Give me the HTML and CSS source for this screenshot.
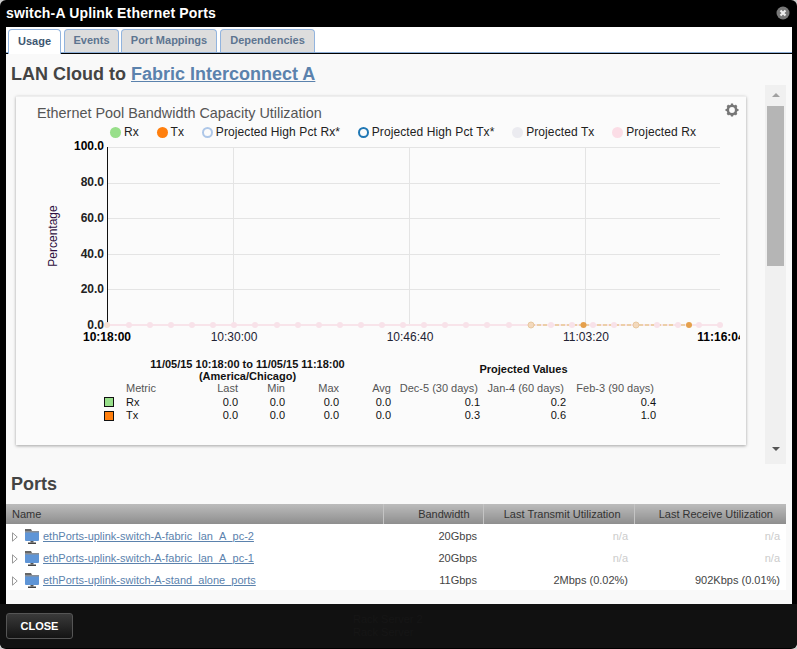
FILE: index.html
```html
<!DOCTYPE html>
<html lang="en">
<head>
<meta charset="UTF-8">
<title>switch-A Uplink Ethernet Ports</title>
<link rel="stylesheet" href="styles.css">
</head>

<body>
<div class="window">

  <!-- title bar -->
  <header class="titlebar">
    <h1>switch-A Uplink Ethernet Ports</h1>
    <svg class="close-x" width="14" height="14" viewBox="0 0 14 14">
      <circle cx="7" cy="7" r="6.5" fill="#777"/>
      <path d="M4.5 4.5l5 5M9.5 4.5l-5 5" stroke="#eee" stroke-width="2.2"/>
    </svg>
  </header>

  <div class="panel">
    <!-- tabs -->
    <nav class="tabs">
      <a href="#" class="tab active">Usage</a>
      <a href="#" class="tab">Events</a>
      <a href="#" class="tab">Port Mappings</a>
      <a href="#" class="tab">Dependencies</a>
    </nav>

    <div class="content">
      <h2 class="heading">LAN Cloud to <a href="#">Fabric Interconnect A</a></h2>

      <div class="chart-row">
        <!-- chart card -->
        <section class="card">
          <svg class="gear" width="14" height="14" viewBox="0 0 14 14">
            <circle cx="7" cy="7" r="4.2" fill="none" stroke="#777" stroke-width="2.6"/>
            <path d="M7 0.5v3M7 10.5v3M0.5 7h3M10.5 7h3M2.4 2.4l2 2M9.6 9.6l2 2M11.6 2.4l-2 2M4.4 9.6l-2 2" stroke="#777" stroke-width="2.2"/>
          </svg>
          <h3 class="card-title">Ethernet Pool Bandwidth Capacity Utilization</h3>

          <ul class="legend">
            <li><i class="dot dot-rx"></i>Rx</li>
            <li><i class="dot dot-tx"></i>Tx</li>
            <li><i class="dot ring-rx"></i>Projected High Pct Rx*</li>
            <li><i class="dot ring-tx"></i>Projected High Pct Tx*</li>
            <li><i class="dot dot-ptx"></i>Projected Tx</li>
            <li><i class="dot dot-prx"></i>Projected Rx</li>
          </ul>

          <!-- svg origin is page x=16, y=140 -->
          <svg class="plot" width="724" height="208" viewBox="0 0 724 208">
            <g class="grid">
              <path d="M91 7.5h613M91 43.5h613M91 78.5h613M91 114.5h613M91 149.5h613"/>
              <path d="M217.5 7v178M393.5 7v178M569.5 7v178"/>
            </g>
            <path class="axis" d="M91.5 7v178"/>
            <text class="percent" transform="translate(41 96) rotate(-90)">Percentage</text>

            <g class="y-labels">
              <text class="strong" x="88" y="10">100.0</text>
              <text x="88" y="46">80.0</text>
              <text x="88" y="82">60.0</text>
              <text x="88" y="118">40.0</text>
              <text x="88" y="153">20.0</text>
              <text x="88" y="189">0.0</text>
            </g>

            <path class="line-pink" d="M91 185h613"/>
            <path class="line-orange" d="M515 185h158"/>
            <g class="pts-pink">
              <circle cx="113" cy="185" r="3"/><circle cx="134" cy="185" r="3"/><circle cx="155" cy="185" r="3"/>
              <circle cx="176" cy="185" r="3"/><circle cx="197" cy="185" r="3"/><circle cx="218" cy="185" r="3"/>
              <circle cx="239" cy="185" r="3"/><circle cx="261" cy="185" r="3"/><circle cx="282" cy="185" r="3"/>
              <circle cx="303" cy="185" r="3"/><circle cx="324" cy="185" r="3"/><circle cx="345" cy="185" r="3"/>
              <circle cx="366" cy="185" r="3"/><circle cx="387" cy="185" r="3"/><circle cx="408" cy="185" r="3"/>
              <circle cx="429" cy="185" r="3"/><circle cx="450" cy="185" r="3"/><circle cx="471" cy="185" r="3"/>
              <circle cx="493" cy="185" r="3"/><circle cx="535" cy="185" r="3"/><circle cx="556" cy="185" r="3"/>
              <circle cx="577" cy="185" r="3"/><circle cx="598" cy="185" r="3"/><circle cx="641" cy="185" r="3"/>
              <circle cx="662" cy="185" r="3"/><circle cx="683" cy="185" r="3"/><circle cx="704" cy="185" r="3"/>
            </g>
            <circle class="pt-first" cx="91" cy="185" r="3"/>
            <circle class="pt-soft" cx="515" cy="185" r="3"/>
            <circle class="pt-solid" cx="567.500" cy="185" r="3"/>
            <circle class="pt-soft" cx="620" cy="185" r="3"/>
            <circle class="pt-solid" cx="673" cy="185" r="3"/>

            <g class="x-labels">
              <text class="strong" x="91" y="201">10:18:00</text>
              <text x="218" y="201">10:30:00</text>
              <text x="394" y="201">10:46:40</text>
              <text x="570" y="201">11:03:20</text>
              <text class="strong" x="705" y="201">11:16:04</text>
            </g>
          </svg>

          <!-- stats under the plot -->
          <div class="stats">
            <div class="st-range">11/05/15 10:18:00 to 11/05/15 11:18:00<br>(America/Chicago)</div>
            <div class="st-proj">Projected Values</div>

            <span></span><span class="hd left">Metric</span><span class="hd">Last</span><span class="hd">Min</span><span class="hd">Max</span><span class="hd">Avg</span><span class="hd pj">Dec-5 (30 days)</span><span class="hd pj">Jan-4 (60 days)</span><span class="hd pj">Feb-3 (90 days)</span>

            <span><i class="swatch sw-rx"></i></span><span class="left">Rx</span><span>0.0</span><span>0.0</span><span>0.0</span><span>0.0</span><span>0.1</span><span>0.2</span><span>0.4</span>

            <span><i class="swatch sw-tx"></i></span><span class="left">Tx</span><span>0.0</span><span>0.0</span><span>0.0</span><span>0.0</span><span>0.3</span><span>0.6</span><span>1.0</span>
          </div>
        </section>

        <!-- scrollbar -->
        <div class="scrollbar">
          <b class="arrow up"></b>
          <div class="thumb"></div>
          <b class="arrow down"></b>
        </div>
      </div>

      <h2 class="heading ports-title">Ports</h2>

      <table class="ports">
        <thead>
          <tr>
            <th class="c-name">Name</th>
            <th class="c-bw">Bandwidth</th>
            <th class="c-tx">Last Transmit Utilization</th>
            <th class="c-rx">Last Receive Utilization</th>
          </tr>
        </thead>
        <tbody>
          <tr>
            <td class="c-name"><svg class="twist" width="6" height="10" viewBox="0 0 6 10"><path d="M.5 .8v8.400L5.200 5z"/></svg><svg class="folder" width="16" height="17" viewBox="0 0 16 17"><use href="#port-folder"/></svg><a href="#">ethPorts-uplink-switch-A-fabric_lan_A_pc-2</a></td>
            <td>20Gbps</td><td class="na">n/a</td><td class="na">n/a</td>
          </tr>
          <tr>
            <td class="c-name"><svg class="twist" width="6" height="10" viewBox="0 0 6 10"><path d="M.5 .8v8.400L5.200 5z"/></svg><svg class="folder" width="16" height="17" viewBox="0 0 16 17"><use href="#port-folder"/></svg><a href="#">ethPorts-uplink-switch-A-fabric_lan_A_pc-1</a></td>
            <td>20Gbps</td><td class="na">n/a</td><td class="na">n/a</td>
          </tr>
          <tr>
            <td class="c-name"><svg class="twist" width="6" height="10" viewBox="0 0 6 10"><path d="M.5 .8v8.400L5.200 5z"/></svg><svg class="folder" width="16" height="17" viewBox="0 0 16 17"><use href="#port-folder"/></svg><a href="#">ethPorts-uplink-switch-A-stand_alone_ports</a></td>
            <td>11Gbps</td><td>2Mbps (0.02%)</td><td>902Kbps (0.01%)</td>
          </tr>
        </tbody>
      </table>
    </div>
  </div>

  <!-- footer -->
  <footer class="footer">
    <button class="close-btn" type="button">CLOSE</button>
    <div class="ghost">Rack Server 2<br>Rack Server</div>
  </footer>
</div>

<svg width="0" height="0" class="defs">
  <defs>
    <g id="port-folder">
      <path d="M1 3V1h6l1 2z" fill="#666"/>
      <rect x="1" y="3" width="14" height="10" rx="1" fill="#5f95d6"/>
      <rect x="1" y="3" width="14" height="1.500" fill="#8a8f96"/>
      <path d="M6.500 13h3v1.500h-3z" fill="#555"/>
      <path d="M4 14.500h8V16H4z" fill="#444"/>
    </g>
  </defs>
</svg>
</body>
</html>
```

FILE: styles.css
```css
/* page */
html, body{
  margin:0;
  height:100%;
  overflow:hidden;
}
body{
  background:#ccc;
  font-family:"Liberation Sans", Arial, sans-serif;
  font-size:11px;
  color:#222;
}
.window{
  width:797px;
  height:649px;
  box-sizing:border-box;
  background:#000;
  border-radius:6px;
  display:flex;
  flex-direction:column;
  overflow:hidden;
}
.defs{ position:absolute }

/* title bar */
.titlebar{
  height:27px;
  flex:none;
  display:flex;
  align-items:center;
  justify-content:space-between;
  padding:0 7px 1px 6px;
  box-sizing:border-box;
}
.titlebar h1{
  margin:0;
  font-size:14px;
  letter-spacing:.17px;
  color:#fff;
}

/* main panel */
.panel{
  flex:none;
  height:577px;
  margin:0 5px 0 6px;
  background:#fff;
  display:flex;
  flex-direction:column;
  overflow:hidden;
}

/* tabs */
.tabs{
  height:27px;
  flex:none;
  box-sizing:border-box;
  display:flex;
  gap:3px;
  padding:2px 0 0 2px;
  align-items:flex-end;
  border-bottom:1px solid #000;
  box-shadow:inset 0 -1px 0 #8fb0d8;
}
.tab{
  box-sizing:border-box;
  height:23px;
  margin-bottom:1px;
  padding:0;
  line-height:20px;
  font-size:11px;
  font-weight:bold;
  text-align:center;
  color:#5d7590;
  text-decoration:none;
  background:#ddd;
  border:1px solid #92b4de;
  border-bottom:none;
  border-radius:4px 4px 0 0;
}
.tab:nth-child(1){ width:53px }
.tab:nth-child(2){ width:55px }
.tab:nth-child(3){ width:96px; margin-left:-1px }
.tab:nth-child(4){ width:95px }
.tab.active{
  background:#fff;
  color:#3d5670;
  height:25px;
  line-height:22px;
  margin-bottom:-1px;
  position:relative;
}

/* content */
.content{
  flex:1;
  background:#f9f9f9;
  overflow:hidden;
}
.heading{
  margin:0;
  padding:8px 0 0 5px;
  font-size:18px;
  line-height:24px;
  font-weight:bold;
  color:#444;
}
.heading a{ color:#5b82ad }

.chart-row{
  display:flex;
  align-items:flex-start;
  margin-top:-1px;
  padding-left:10px;
}

/* chart card */
.card{
  position:relative;
  width:730px;
  height:349px;
  box-sizing:border-box;
  margin-top:11px;
  background:#fbfbfb;
  border-top:1px solid #eee;
  box-shadow:0 1px 3px rgba(0,0,0,.35);
}
.gear{
  position:absolute;
  top:6px;
  right:7px;
}
.card-title{
  margin:0;
  padding:8px 0 0 21px;
  font-size:14.4px;
  line-height:17px;
  font-weight:normal;
  color:#555;
}
.legend{
  list-style:none;
  margin:0;
  padding:3px 0 0 94px;
  display:flex;
  gap:17.7px;
  font-size:12px;
  letter-spacing:.1px;
  line-height:15px;
  color:#222;
}
.legend li{
  display:flex;
  align-items:center;
  gap:3px;
}
.dot{
  width:11px;
  height:11px;
  box-sizing:border-box;
  border-radius:50%;
}
.dot-rx{ background:#98df8a }
.dot-tx{ background:#ff7f0e }
.ring-rx{ border:2px solid #aec7e8 }
.ring-tx{ border:2px solid #1f77b4 }
.dot-ptx{ background:#ebebf0 }
.dot-prx{ background:#fbdde6 }

/* plot */
.plot{
  display:block;
  font-family:"Liberation Sans", Arial, sans-serif;
}
.grid path{
  stroke:#e4e4e4;
  fill:none;
}
.axis{
  stroke:#111;
  fill:none;
}
.percent{
  font-size:12px;
  text-anchor:middle;
  fill:#301040;
}
.y-labels text{
  font-size:12px;
  font-weight:bold;
  text-anchor:end;
  fill:#222;
}
.y-labels .strong{ fill:#000 }
.x-labels text{
  font-size:12px;
  text-anchor:middle;
  fill:#223;
}
.x-labels .strong{
  font-weight:bold;
  fill:#000;
}
.line-pink{
  stroke:#f8e4ea;
  stroke-width:2;
}
.line-orange{
  stroke:#eccfa8;
  stroke-width:2;
  stroke-dasharray:4 2;
}
.pts-pink circle{ fill:#f8e2e9 }
.pt-first{ fill:#f5e0d4 }
.pt-soft{
  fill:#f3d9bd;
  stroke:#e8c8a0;
}
.pt-solid{ fill:#e5a04c }

/* stats */
.stats{
  display:grid;
  grid-template-columns:22px 50px 62px 47px 54px 52px 89px 86px 90px;
  margin:10px 0 0 88px;
  width:552px;
  font-size:11px;
  line-height:13.500px;
  text-align:right;
  color:#111;
  align-items:center;
}
.st-range{
  grid-column:1 / 7;
  text-align:center;
  font-weight:bold;
  line-height:12px;
}
.st-proj{
  grid-column:7 / 10;
  text-align:center;
  font-weight:bold;
}
.stats .left{ text-align:left }
.stats .hd{ color:#555 }
.stats .pj{ padding-right:2px }
.swatch{
  display:block;
  box-sizing:border-box;
  width:10px;
  height:10px;
  border:1px solid #111;
}
.sw-rx{ background:#98df8a }
.sw-tx{ background:#ff7f0e }

/* scrollbar */
.scrollbar{
  width:21px;
  height:379px;
  margin-left:19px;
  background:#f0f0f0;
  display:flex;
  flex-direction:column;
  align-items:center;
}
.arrow{
  width:0;
  height:0;
  flex:none;
  border-left:4px solid transparent;
  border-right:4px solid transparent;
}
.arrow.up{
  border-bottom:4px solid #a0a0a0;
  margin:8px 0 9px;
}
.arrow.down{
  border-top:4px solid #555;
  margin-top:181px;
}
.thumb{
  width:17px;
  height:160px;
  flex:none;
  background:#b5b5b5;
}

/* ports table */
.ports-title{
  padding:8px 0 0 5px;
}
.ports{
  border-collapse:collapse;
  table-layout:fixed;
  width:780px;
  margin-top:8px;
  font-size:11px;
  background:#fff;
}
.ports th{
  height:20px;
  padding:0 13px 0 0;
  box-sizing:border-box;
  font-weight:normal;
  font-size:11px;
  text-align:right;
  color:#333;
  background:linear-gradient(#bcbcbc,#8e8e8e);
  border-left:1px solid #c4c4c4;
}
.ports .c-name{
  width:377px;
  text-align:left;
  padding-left:6px;
  border-left:none;
}
.ports .c-bw{ width:100px }
.ports .c-tx{ width:151px }
.ports .c-rx{ width:152px }
.ports td{
  height:22px;
  box-sizing:border-box;
  padding:2px 6px 0 0;
  text-align:right;
  color:#444;
  white-space:nowrap;
}
.ports td.c-name{
  padding-left:6px;
  line-height:18px;
}
.ports a{ color:#5b82ad }
.ports .na{ color:#ccc }
.twist{
  vertical-align:middle;
  margin-right:6px;
  fill:#fff;
  stroke:#999;
}
.folder{
  vertical-align:middle;
  margin-right:3px;
}

/* footer */
.footer{
  flex:1;
  margin-bottom:1px;
  background:#111;
  display:flex;
  align-items:center;
  padding-left:6px;
  position:relative;
}
.close-btn{
  width:67px;
  height:26px;
  font-family:inherit;
  font-size:11px;
  font-weight:bold;
  color:#fff;
  background:linear-gradient(#3a3a3a,#141414);
  border:1px solid #555;
  border-radius:3px;
  padding:0;
}
.ghost{
  position:absolute;
  left:353px;
  top:9px;
  font-size:11px;
  line-height:13px;
  color:#161616;
}
```
